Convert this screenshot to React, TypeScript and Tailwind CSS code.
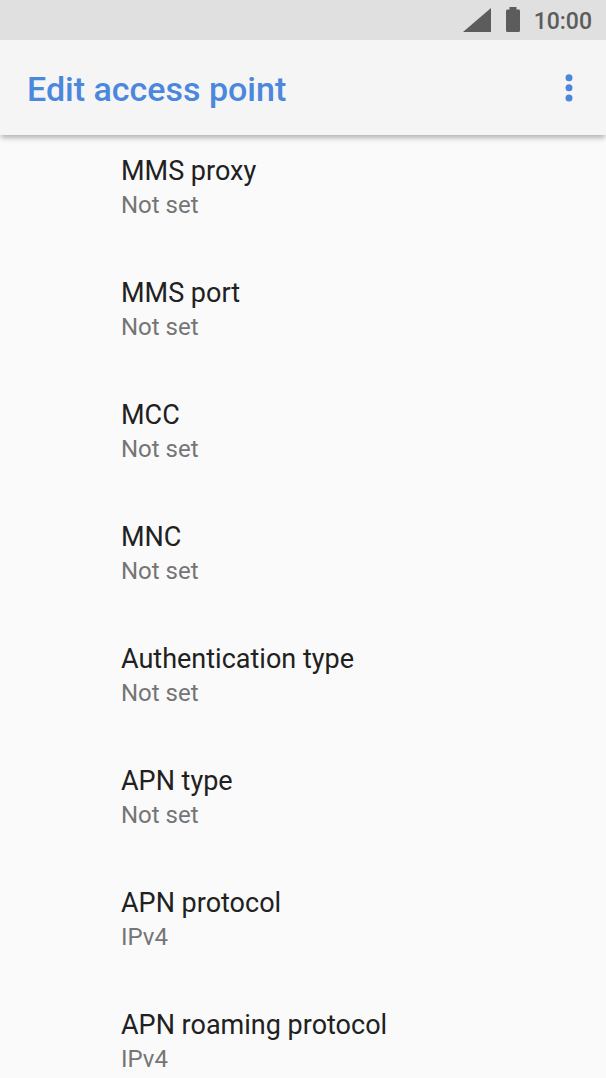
interface Setting {
  id: string;
  title: string;
  value: string;
}

const settings: Setting[] = [
  { id: 'mms-proxy', title: 'MMS proxy', value: 'Not set' },
  { id: 'mms-port', title: 'MMS port', value: 'Not set' },
  { id: 'mcc', title: 'MCC', value: 'Not set' },
  { id: 'mnc', title: 'MNC', value: 'Not set' },
  { id: 'auth-type', title: 'Authentication type', value: 'Not set' },
  { id: 'apn-type', title: 'APN type', value: 'Not set' },
  { id: 'apn-protocol', title: 'APN protocol', value: 'IPv4' },
  { id: 'apn-roaming', title: 'APN roaming protocol', value: 'IPv4' },
];

export default function EditAccessPointPage() {
  return (
    <div className="h-screen flex flex-col overflow-hidden bg-[#fafafa] font-[Roboto,sans-serif]">
      {/* Status bar */}
      <div className="h-10 shrink-0 flex items-end justify-end bg-[#e0e0e0] pr-[14px] pb-2 text-[#5c5c5c]">
        <svg className="w-7 h-6" viewBox="0 0 28 24" fill="currentColor" aria-hidden="true">
          <path d="M0 24 28 0V24Z" />
        </svg>
        <svg className="w-[14px] h-[25px] ml-[15px]" viewBox="0 0 14 25" fill="currentColor" aria-hidden="true">
          <path d="M3.500 0h7v2.500H12.500A1.500 1.500 0 0 1 14 4v19.500a1.500 1.500 0 0 1-1.500 1.500h-11A1.500 1.500 0 0 1 0 23.500V4a1.500 1.500 0 0 1 1.500-1.500H3.500Z" />
        </svg>
        <span className="ml-[14px] text-[23px] leading-5 font-medium">10:00</span>
      </div>

      {/* Header */}
      <header className="relative h-[95px] shrink-0 flex items-center justify-between bg-[#f5f5f5] pl-[27px] pr-6 shadow-[0_4px_5px_-1px_rgba(0,0,0,0.28)]">
        <h1 className="pt-[2px] text-[34px] leading-10 font-medium text-[#4a87dd]">Edit access point</h1>
        <button type="button" aria-label="More options" className="w-[26px] h-10 flex items-center justify-center text-[#4a87dd]">
          <svg className="w-2 h-7" viewBox="0 0 8 28" fill="currentColor" aria-hidden="true">
            <circle cx="4" cy="3.700" r="3.500" />
            <circle cx="4" cy="13.800" r="3.500" />
            <circle cx="4" cy="23.900" r="3.500" />
          </svg>
        </button>
      </header>

      {/* Settings list */}
      <main className="flex-1 min-h-0 overflow-hidden">
        <ul>
          {settings.map((setting) => (
            <li key={setting.id}>
              <button type="button" className="block w-full h-[122px] pl-[121px] pb-[18px] text-left">
                <span className="block text-[27px] leading-9 text-[#212121]">{setting.title}</span>
                <span className="block text-2xl leading-8 text-[#757575]">{setting.value}</span>
              </button>
            </li>
          ))}
        </ul>
      </main>
    </div>
  );
}
